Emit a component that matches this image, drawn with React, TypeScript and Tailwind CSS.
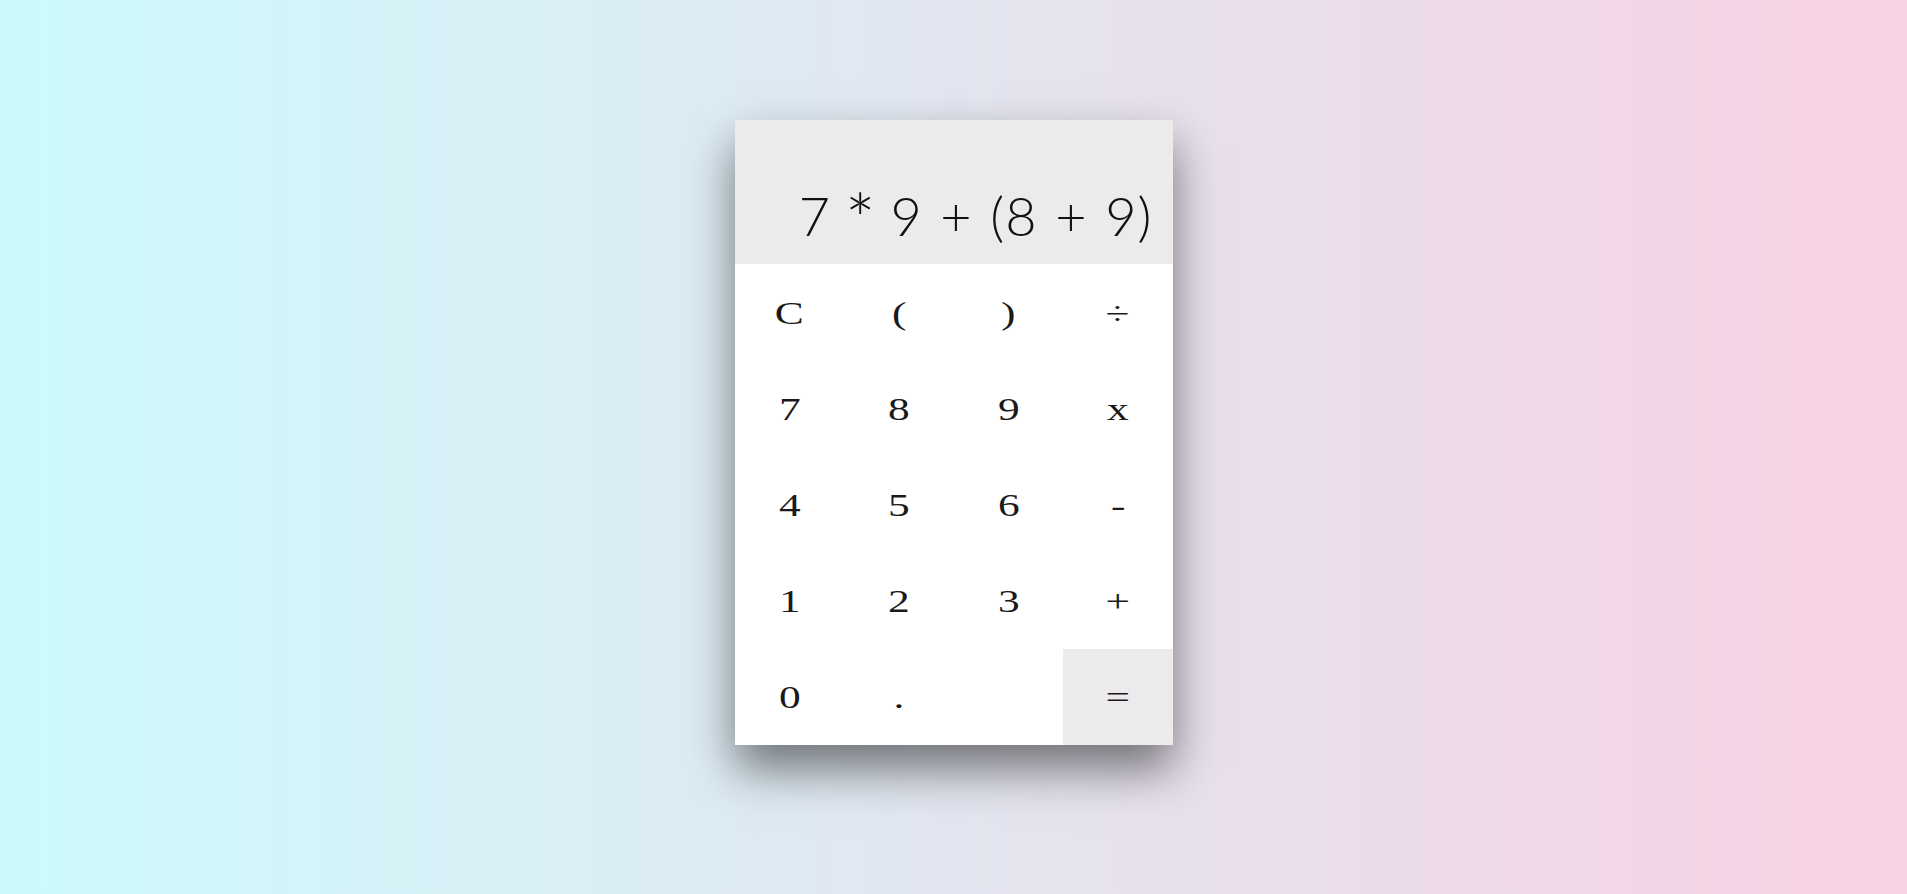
import React from "react";

const rows: string[][] = [
  ["C", "(", ")", "÷"],
  ["7", "8", "9", "x"],
  ["4", "5", "6", "-"],
  ["1", "2", "3", "+"],
  ["0", ".", "", "="],
];

export default function App() {
  return (
    <div className="w-[1907px] h-[894px] overflow-hidden bg-[linear-gradient(to_right,#ccfbfd,#e3e6f0_50%,#f8d1e4)] flex justify-center pt-[120px]">
      <div className="w-[438px] h-[625px] flex flex-col bg-white shadow-[0_24px_44px_rgba(0,0,0,0.5)]">
        <div className="h-[144px] bg-[#eceaed] flex items-end justify-end pr-[20px] pb-[21px]">
          <div className="font-['Lato',sans-serif] font-light text-[54px] leading-none tracking-[1px] [word-spacing:2px] text-[#111] whitespace-pre">
            7 <span className="inline-block scale-[1.35] translate-y-[4px]">*</span> 9 + (8 + 9)
          </div>
        </div>
        <div className="flex-1 grid grid-cols-4 grid-rows-5">
          {rows.flat().map((k, i) => (
            <div
              key={i}
              className={
                "flex items-center justify-center text-[#1a1a1a] " +
                (k === "=" ? "bg-[#eceaed]" : "bg-white")
              }
            >
              <span className="font-['Liberation_Serif',serif] text-[31px] leading-none inline-block scale-x-[1.4] translate-y-[1px]">
                {k}
              </span>
            </div>
          ))}
        </div>
      </div>
    </div>
  );
}
